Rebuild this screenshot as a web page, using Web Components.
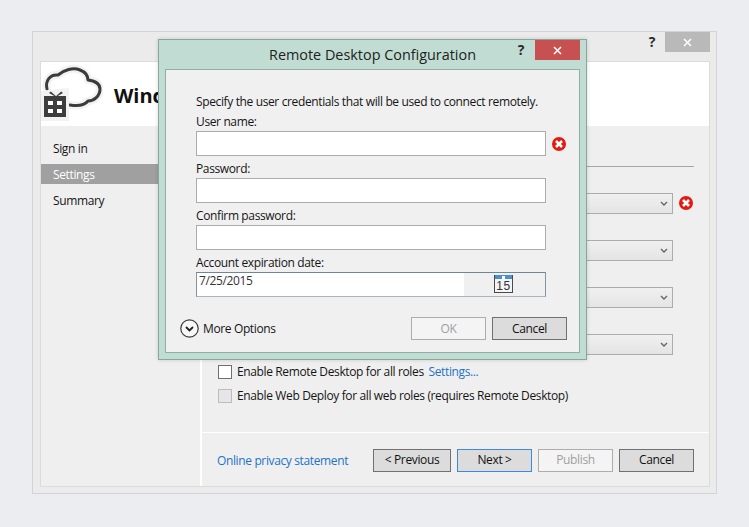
<!DOCTYPE html>
<html>
<head>
<meta charset="utf-8">
<title>Remote Desktop Configuration</title>
<style>
  html, body {
    margin: 0;
    height: 100%;
    overflow: hidden;
  }
  body {
    background-color: #ecedf1;
    font: 12px/16px "Open Sans", "Noto Sans", sans-serif;
    letter-spacing: -0.37px;
    color: #151515;
  }
</style>
</head>
<body>
<wizard-window>
  <wizard-nav slot="nav"></wizard-nav>
  <wizard-page slot="page"></wizard-page>
</wizard-window>
<config-dialog></config-dialog>

<script>
class WizButton extends HTMLElement {
  constructor() {
    super();
    this.attachShadow({ mode: "open" }).innerHTML = `
      <style>
        :host {
          display: flex;
          align-items: center;
          justify-content: center;
          box-sizing: border-box;
          width: 75px;
          height: 23px;
          background-color: #dcdcdc;
          border: 1px solid #707070;
          color: #111;
        }
        :host([wide]) { width: 78px; }
        :host([focused]) { border-color: #3c8ae0; }
        :host([disabled]) {
          background-color: #f4f4f4;
          border-color: #adadad;
          color: #a0a0a0;
        }
      </style>
      <slot></slot>`;
  }
}
customElements.define("wiz-button", WizButton);

class ErrorIcon extends HTMLElement {
  constructor() {
    super();
    this.attachShadow({ mode: "open" }).innerHTML = `
      <style>
        :host { display: block; width: 14px; height: 14px; flex: none; }
        svg { display: block; }
      </style>
      <svg width="14" height="14" viewBox="0 0 14 14">
        <circle cx="7" cy="7" r="7" fill="#e21b12"/>
        <path d="M4 4l6 6M10 4l-6 6" stroke="#fff" stroke-width="2.6"/>
      </svg>`;
  }
}
customElements.define("error-icon", ErrorIcon);

class ComboBox extends HTMLElement {
  constructor() {
    super();
    this.attachShadow({ mode: "open" }).innerHTML = `
      <style>
        :host {
          display: flex;
          align-items: center;
          justify-content: flex-end;
          box-sizing: border-box;
          width: 455px;
          height: 21px;
          padding-right: 4px;
          background: linear-gradient(#f0f0f0, #e4e4e4);
          border: 1px solid #acacac;
        }
        svg { display: block; }
      </style>
      <svg width="8" height="6" viewBox="0 0 8 6">
        <path d="M1 1l3 3 3-3" fill="none" stroke="#666" stroke-width="1.4"/>
      </svg>`;
  }
}
customElements.define("combo-box", ComboBox);

class CheckRow extends HTMLElement {
  constructor() {
    super();
    this.attachShadow({ mode: "open" }).innerHTML = `
      <style>
        :host {
          display: flex;
          align-items: center;
          height: 14px;
          gap: 5px;
        }
        .box {
          box-sizing: border-box;
          width: 14px;
          height: 14px;
          background-color: #fff;
          border: 1px solid #707070;
        }
        :host([disabled]) .box {
          background-color: #e6e6e6;
          border-color: #bcbcbc;
        }
      </style>
      <div class="box"></div>
      <slot></slot>`;
  }
}
customElements.define("check-row", CheckRow);

class CloudLogo extends HTMLElement {
  constructor() {
    super();
    this.attachShadow({ mode: "open" }).innerHTML = `
      <style>
        :host { display: block; width: 62px; height: 60px; flex: none; }
        svg { display: block; }
      </style>
      <svg width="62" height="60" viewBox="41 65 62 60">
        <g fill="none" stroke-linecap="round" stroke-linejoin="round">
          <path d="M47 90C45 82 50 75 58 76C64 71 73 68 80 71C85 73 88 77 88 81C95 82 100 85 100 90C100 97 94 102 88 102C84 107 76 107 70 106" stroke="#f2f2f2" stroke-width="8"/>
          <path d="M47 90C45 82 50 75 58 76C64 71 73 68 80 71C85 73 88 77 88 81C95 82 100 85 100 90C100 97 94 102 88 102C84 107 76 107 70 106" stroke="#3b3b3b" stroke-width="3"/>
        </g>
        <path d="M41 92L69 89V122H41Z" fill="#f2f2f2"/>
        <path d="M44 97H66V118H44Z" fill="#3d3d3d"/>
        <path d="M49 94l1.800-1.500 5 4.500h-1.500zM63 94l-1.800-1.500-5 4.500h1.500z" fill="#3d3d3d"/>
        <path d="M48 102h5v4h-5zM57 102h5v4h-5zM48 110h5v4h-5zM57 110h5v4h-5z" fill="#fff"/>
      </svg>`;
  }
}
customElements.define("cloud-logo", CloudLogo);

class WizardWindow extends HTMLElement {
  constructor() {
    super();
    this.attachShadow({ mode: "open" }).innerHTML = `
      <style>
        :host {
          display: flex;
          flex-direction: column;
          box-sizing: border-box;
          width: 685px;
          height: 463px;
          margin: 31px 0 0 32px;
          padding: 0 6px 6px 7px;
          background-color: #ebebeb;
          border: 1px solid #d4d4d4;
        }
        .titlebar {
          display: flex;
          justify-content: flex-end;
          height: 29px;
          margin-right: 0;
        }
        .help {
          margin: 1px 10px 0 0;
          font: bold 14px/18px "Open Sans", sans-serif;
          color: #2b2b2b;
        }
        .close {
          display: flex;
          align-items: center;
          justify-content: center;
          width: 45px;
          height: 20px;
          background-color: #b9b9b9;
        }
        .frame {
          flex: 1;
          display: flex;
          flex-direction: column;
          background-color: #efefef;
          border: 1px solid #dcdcdc;
        }
        .banner {
          display: flex;
          align-items: center;
          gap: 11px;
          height: 64px;
          background-color: #fff;
          font: bold 20px/26px "Open Sans", sans-serif;
          letter-spacing: 0;
          color: #111;
        }
        .banner span { padding-top: 4px; }
        .body {
          flex: 1;
          display: flex;
        }
      </style>
      <div class="titlebar">
        <div class="help">?</div>
        <div class="close">
          <svg width="9" height="9" viewBox="0 0 9 9"><path d="M1 1l7 7M8 1L1 8" stroke="#fff" stroke-width="1.5"/></svg>
        </div>
      </div>
      <div class="frame">
        <div class="banner"><cloud-logo></cloud-logo><span>Wind</span></div>
        <div class="body">
          <slot name="nav"></slot>
          <slot name="page"></slot>
        </div>
      </div>`;
  }
}
customElements.define("wizard-window", WizardWindow);

class WizardNav extends HTMLElement {
  constructor() {
    super();
    this.attachShadow({ mode: "open" }).innerHTML = `
      <style>
        :host {
          display: flex;
          flex-direction: column;
          gap: 6px;
          box-sizing: border-box;
          width: 159px;
          padding-top: 12px;
        }
        div {
          height: 20px;
          padding-left: 12px;
          line-height: 22px;
        }
        .active {
          background-color: #a0a0a0;
          color: #fff;
        }
      </style>
      <div>Sign in</div>
      <div class="active">Settings</div>
      <div>Summary</div>`;
  }
}
customElements.define("wizard-nav", WizardNav);

class WizardPage extends HTMLElement {
  constructor() {
    super();
    this.attachShadow({ mode: "open" }).innerHTML = `
      <style>
        :host {
          display: flex;
          flex-direction: column;
          flex: 1;
          border-left: 2px solid #fff;
        }
        .content {
          flex: 1;
          display: flex;
          flex-direction: column;
          padding: 40px 15px 0 16px;
        }
        hr {
          margin: 0 0 26px;
          border: 0;
          border-top: 1px solid #a5a5a5;
        }
        .row {
          display: flex;
          align-items: center;
          gap: 6px;
          margin-bottom: 26px;
        }
        .row error-icon { margin-top: -1px; }
        .checks {
          display: flex;
          flex-direction: column;
          gap: 10px;
          margin-top: -16px;
        }
        a {
          color: #1e73c8;
          text-decoration: none;
        }
        .settings { margin-left: 2px; }
        .footer {
          display: flex;
          align-items: center;
          gap: 6px;
          height: 52px;
          padding: 1px 15px 0;
          box-sizing: content-box;
          border-top: 1px solid #fff;
        }
        .footer a {
          margin-right: auto;
          padding-top: 1px;
        }
      </style>
      <div class="content">
        <hr>
        <div class="row"><combo-box></combo-box><error-icon></error-icon></div>
        <div class="row"><combo-box></combo-box></div>
        <div class="row"><combo-box></combo-box></div>
        <div class="row"><combo-box></combo-box></div>
        <div class="checks">
          <check-row><span>Enable Remote Desktop for all roles <a class="settings" href="#">Settings...</a></span></check-row>
          <check-row disabled><span>Enable Web Deploy for all web roles (requires Remote Desktop)</span></check-row>
        </div>
      </div>
      <div class="footer">
        <a href="#">Online privacy statement</a>
        <wiz-button wide>&lt; Previous</wiz-button>
        <wiz-button focused>Next &gt;</wiz-button>
        <wiz-button disabled>Publish</wiz-button>
        <wiz-button>Cancel</wiz-button>
      </div>`;
  }
}
customElements.define("wizard-page", WizardPage);

class TextField extends HTMLElement {
  constructor() {
    super();
    this.attachShadow({ mode: "open" }).innerHTML = `
      <style>
        :host {
          display: block;
        }
        .label {
          height: 16px;
          margin-bottom: 1px;
        }
        .line {
          display: flex;
          align-items: center;
          gap: 6px;
        }
        .input {
          flex: none;
          box-sizing: border-box;
          width: 350px;
          height: 25px;
          background-color: #fff;
          border: 1px solid #acacac;
        }
      </style>
      <div class="label"><slot></slot></div>
      <div class="line">
        <div class="input"></div>
        <slot name="after"></slot>
      </div>`;
  }
}
customElements.define("text-field", TextField);

class DateField extends HTMLElement {
  constructor() {
    super();
    this.attachShadow({ mode: "open" }).innerHTML = `
      <style>
        :host {
          display: block;
        }
        .label {
          height: 16px;
          margin-bottom: 1px;
        }
        .input {
          display: flex;
          box-sizing: border-box;
          width: 350px;
          height: 25px;
          border: 1px solid;
          border-color: #6e8798 #7f96a6 #a9b6bf;
        }
        .value {
          flex: 1;
          padding-left: 2px;
          line-height: 15px;
          background-color: #fff;
          color: #333;
        }
        .side {
          display: flex;
          justify-content: center;
          box-sizing: border-box;
          width: 81px;
          padding-top: 2px;
          padding-right: 2px;
          background-color: #f0f0f0;
        }
        .cal {
          position: relative;
          box-sizing: border-box;
          width: 19px;
          height: 18px;
          padding-top: 4px;
          background: linear-gradient(#4f8fc9 0 4px, #f4f4f4 4px);
          border: 1px solid #4a4a4a;
          border-top: 0;
          font: 12px/14px "Liberation Sans", sans-serif;
          letter-spacing: 0.5px;
          text-align: center;
          color: #333;
        }
        .cal::before {
          content: "";
          position: absolute;
          left: 7px;
          top: 1px;
          width: 3px;
          height: 3px;
          background-color: #fff;
        }
      </style>
      <div class="label"><slot></slot></div>
      <div class="input">
        <div class="value">7/25/2015</div>
        <div class="side"><div class="cal">15</div></div>
      </div>`;
  }
}
customElements.define("date-field", DateField);

class ConfigDialog extends HTMLElement {
  constructor() {
    super();
    this.attachShadow({ mode: "open" }).innerHTML = `
      <style>
        :host {
          position: absolute;
          left: 158px;
          top: 39px;
          display: flex;
          flex-direction: column;
          box-sizing: border-box;
          width: 429px;
          height: 321px;
          padding: 0 6px 6px;
          background-color: #c1ddd3;
          border: 1px solid #87a69c;
          box-shadow: 0 0 4px rgba(0, 0, 0, 0.15);
        }
        .titlebar {
          display: flex;
          position: relative;
          justify-content: center;
          height: 29px;
        }
        .title {
          margin-top: 5px;
          font-size: 14.4px;
          line-height: 19px;
          letter-spacing: 0;
          color: #222;
        }
        .help {
          position: absolute;
          right: 56px;
          top: 1px;
          font: bold 14px/18px "Open Sans", sans-serif;
          color: #2b2b2b;
        }
        .close {
          position: absolute;
          right: 0;
          top: 0;
          display: flex;
          align-items: center;
          justify-content: center;
          width: 45px;
          height: 20px;
          background-color: #c75050;
        }
        .client {
          flex: 1;
          display: flex;
          flex-direction: column;
          padding: 24px 30px 0;
          background-color: #f0f0f0;
          border: 1px solid #8fb0a5;
        }
        .intro {
          height: 20px;
          white-space: nowrap;
        }
        .fields {
          display: flex;
          flex-direction: column;
          gap: 5px;
        }
        .foot {
          display: flex;
          align-items: center;
          gap: 6px;
          margin: 20px -18px 0 -16px;
        }
        .more {
          display: flex;
          align-items: center;
          gap: 4px;
          margin-right: auto;
        }
        svg { display: block; }
      </style>
      <div class="titlebar">
        <div class="title">Remote Desktop Configuration</div>
        <div class="help">?</div>
        <div class="close">
          <svg width="9" height="9" viewBox="0 0 9 9"><path d="M1 1l7 7M8 1L1 8" stroke="#fff" stroke-width="1.5"/></svg>
        </div>
      </div>
      <div class="client">
        <div class="intro">Specify the user credentials that will be used to connect remotely.</div>
        <div class="fields">
          <text-field>User name:<error-icon slot="after"></error-icon></text-field>
          <text-field>Password:</text-field>
          <text-field>Confirm password:</text-field>
          <date-field>Account expiration date:</date-field>
        </div>
        <div class="foot">
          <div class="more">
            <svg width="19" height="19" viewBox="0 0 19 19">
              <circle cx="9.5" cy="9.5" r="8.700" fill="#f7f7f7" stroke="#3a3a3a" stroke-width="1.2"/>
              <path d="M6 8l3.500 3.500L13 8" fill="none" stroke="#222" stroke-width="1.8"/>
            </svg>
            <span>More Options</span>
          </div>
          <wiz-button disabled>OK</wiz-button>
          <wiz-button>Cancel</wiz-button>
        </div>
      </div>`;
  }
}
customElements.define("config-dialog", ConfigDialog);
</script>
</body>
</html>
